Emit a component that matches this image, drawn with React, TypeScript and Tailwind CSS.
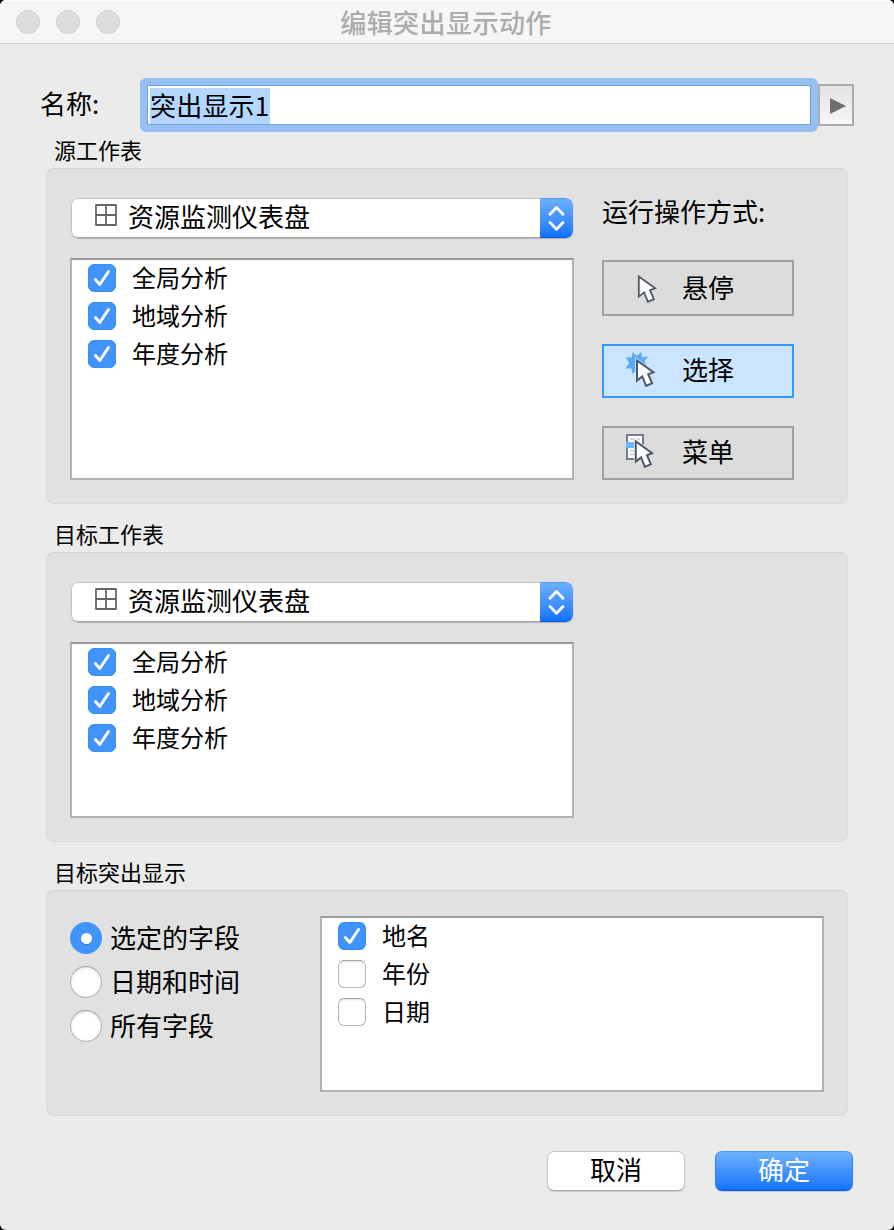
import { useState } from "react";
import clsx from "clsx";

interface CheckItem {
  label: string;
  checked: boolean;
}

const SHEETS: CheckItem[] = [
  { label: "全局分析", checked: true },
  { label: "地域分析", checked: true },
  { label: "年度分析", checked: true },
];

const FIELDS: CheckItem[] = [
  { label: "地名", checked: true },
  { label: "年份", checked: false },
  { label: "日期", checked: false },
];

const HIGHLIGHT_MODES = ["选定的字段", "日期和时间", "所有字段"];

const CURSOR = "M16.8 8.4V28.6L22.1 24.4L25.9 33.8L31.9 31.2L28 22.2L33.2 20.2Z";

// 8-pointed burst behind the select cursor
const BURST =
  "M14.9 5L19.6 1L19.8 6.2L26 5.6L22.6 10.5L26 16.5L19.8 17.1L15 19L10.2 23L9.6 17.6L3.6 17.4L7.2 12L3.6 6.2L9.8 6.4L10.4 1Z";

const HoverIcon = () => (
  <svg width="40" height="40" viewBox="0 0 40 40">
    <path d={CURSOR} fill="#fff" stroke="#505a66" strokeWidth="1.8" />
  </svg>
);

const SelectIcon = () => (
  <svg width="40" height="40" viewBox="0 0 40 40">
    <path d={BURST} fill="#5aabf5" />
    <g transform="translate(-1.8 1)">
      <path d={CURSOR} fill="#cbe4ff" stroke="#cbe4ff" strokeWidth="3.6" />
      <path d={CURSOR} fill="#fff" stroke="#505a66" strokeWidth="2" />
    </g>
  </svg>
);

const MenuIcon = () => (
  <svg width="40" height="40" viewBox="0 0 40 40">
    <rect x="5" y="2" width="16" height="24" fill="#fff" stroke="#6f7d8c" strokeWidth="2" />
    <path d="M8 6H12M15 6H18M8 17.5H12M8 21.5H12" stroke="#c3c6ca" strokeWidth="1.6" />
    <rect x="4" y="9" width="8" height="6" fill="#6bb8fb" />
    <g transform="translate(-3 0)">
      <path d={CURSOR} fill="#e6e6e6" stroke="#e6e6e6" strokeWidth="3.6" />
      <path d={CURSOR} fill="#fff" stroke="#505a66" strokeWidth="2" />
    </g>
  </svg>
);

const TRIGGERS = [
  { id: "hover", label: "悬停", Icon: HoverIcon, size: "h-[56px]", text: "pb-[2px]" },
  { id: "select", label: "选择", Icon: SelectIcon, size: "h-[54px]", text: "pb-[4px]" },
  { id: "menu", label: "菜单", Icon: MenuIcon, size: "h-[54px]", text: "pb-[4px]" },
];

function TitleBar() {
  return (
    <header className="flex h-[44px] border-t border-b border-t-white border-b-[#cdcdcd] bg-[#f6f6f6]">
      <div className="flex w-[299px] items-center gap-4 pl-4">
        {[0, 1, 2].map((i) => (
          <span key={i} className="size-6 rounded-full border border-[#cecece] bg-[#dddddd]" />
        ))}
      </div>
      <h1 className="w-[294px] text-center text-[26px] leading-[41px] font-medium tracking-[0.45px] text-[#acacac]">
        编辑突出显示动作
      </h1>
    </header>
  );
}

function GroupLabel({ children, className }: { children: React.ReactNode; className: string }) {
  return (
    <h2 className={clsx("flex items-end pb-[2px] pl-[8px] text-[22px] leading-[34px] font-normal", className)}>
      {children}
    </h2>
  );
}

function Group({ children, className }: { children: React.ReactNode; className: string }) {
  return (
    <section
      className={clsx(
        "flex w-[802px] rounded-[8px] border border-[#dadada] border-t-[#d2d2d2] bg-[#e1e1e1] pl-[23px]",
        className
      )}
    >
      {children}
    </section>
  );
}

function DashboardSelect() {
  return (
    <button className="ml-px flex h-[40px] w-[502px] overflow-hidden rounded-[7px] bg-white text-left shadow-[0_1px_1px_rgba(0,0,0,0.2)]">
      <span className="flex h-full flex-1 rounded-l-[7px] border border-r-0 border-[#c3c3c3] border-b-[#a6a6a6] pl-[23px]">
        <svg width="22" height="22" viewBox="0 0 22 22" className="mt-[5px]">
          <path d="M1 1H21V21H1ZM11 1V21M1 11H21" fill="none" stroke="#666" strokeWidth="1.8" strokeLinejoin="round" />
        </svg>
        <span className="ml-[11px] text-[26px] leading-[33px]">资源监测仪表盘</span>
      </span>
      <span className="h-full w-[33px] rounded-r-[7px] border-t border-b border-t-[#4a9bf8] border-b-[#0a55f0] bg-linear-to-b from-[#6cb1fb] to-[#1072fe]">
        <svg width="33" height="38" viewBox="0 0 33 38">
          <path
            d="M10 15.2L16.5 8.4L23 15.2M10 23.6L16.5 30.2L23 23.6"
            fill="none"
            stroke="#fff"
            strokeWidth="2.8"
            strokeLinecap="round"
            strokeLinejoin="round"
          />
        </svg>
      </span>
    </button>
  );
}

function Checkbox({ checked }: { checked: boolean }) {
  if (!checked) {
    return (
      <span className="size-7 rounded-[6px] border border-[#b9b9b9] border-t-[#a6a6a6] bg-white shadow-[inset_0_1px_2px_rgba(0,0,0,0.12)]" />
    );
  }
  return (
    <span className="size-7 rounded-[6px] border border-[#3b8df4] bg-[#4094fc]">
      <svg width="26" height="26" viewBox="1 1 26 26">
        <path
          d="M7.4 15.5L11.8 20.5L20.5 7.5"
          fill="none"
          stroke="#fff"
          strokeWidth="2.9"
          strokeLinecap="round"
          strokeLinejoin="round"
        />
      </svg>
    </span>
  );
}

function CheckList({ initial, className }: { initial: CheckItem[]; className: string }) {
  const [items, setItems] = useState(initial);

  const toggle = (index: number) => {
    setItems(items.map((item, i) => (i === index ? { ...item, checked: !item.checked } : item)));
  };

  return (
    <ul
      className={clsx(
        "flex w-[504px] flex-col gap-[10px] border-2 border-[#b2b2b2] border-t-[#9c9c9c] bg-white pt-[4px] pl-[16px]",
        className
      )}
    >
      {items.map((item, i) => (
        <li key={item.label} className="flex h-7 gap-4" onClick={() => toggle(i)}>
          <Checkbox checked={item.checked} />
          <span className="text-[24px] leading-[26px]">{item.label}</span>
        </li>
      ))}
    </ul>
  );
}

function TriggerButtons() {
  const [active, setActive] = useState("select");

  return (
    <div className="ml-[28px] flex w-[192px] flex-col">
      <p className="h-[62px] text-[26px] leading-[26px] whitespace-nowrap">运行操作方式:</p>
      <div className="flex flex-col gap-[28px]">
        {TRIGGERS.map(({ id, label, Icon, size, text }) => (
          <button
            key={id}
            onClick={() => setActive(id)}
            className={clsx(
              "flex items-center border-2 pl-[18px] text-[26px]",
              size,
              active === id ? "border-[#3399ff] bg-[#cbe4ff]" : "border-[#9f9f9f] bg-[#dcdcdc]"
            )}
          >
            <Icon />
            <span className={clsx("ml-[20px] leading-[46px]", text)}>{label}</span>
          </button>
        ))}
      </div>
    </div>
  );
}

function HighlightModes() {
  const [mode, setMode] = useState(0);

  return (
    <div className="mt-[6px] flex w-[250px] flex-col gap-[12px]">
      {HIGHLIGHT_MODES.map((label, i) => (
        <label key={label} className="flex h-8 gap-[8px]" onClick={() => setMode(i)}>
          {mode === i ? (
            <span className="flex size-8 items-center justify-center rounded-full bg-[#4094fc]">
              <span className="size-[11px] rounded-full bg-white shadow-[0_1px_1px_rgba(0,0,0,0.2)]" />
            </span>
          ) : (
            <span className="size-8 rounded-full border border-[#b4b4b4] border-t-[#9c9c9c] bg-white shadow-[inset_0_1px_3px_rgba(0,0,0,0.14)]" />
          )}
          <span className="text-[26px] leading-[30px]">{label}</span>
        </label>
      ))}
    </div>
  );
}

export default function App() {
  return (
    <div className="h-[1230px] w-[894px] bg-black font-['Noto_Sans_CJK_SC',sans-serif] text-black">
      <div className="flex h-full flex-col overflow-hidden rounded-[6px] bg-[#ebebeb]">
        <TitleBar />

        <main className="flex flex-col pt-[34px] pl-[46px]">
          <div className="-ml-[6px] flex h-[54px] items-center">
            <span className="w-[100px] pb-[4px] text-[26px] leading-[50px]">名称:</span>
            <div className="h-[54px] w-[678px] rounded-[6px] bg-[#96c0f3] p-[7px]">
              <div className="h-[40px] border border-[#72a0dc] bg-white pt-[2px] pl-[2px]">
                <span className="block h-[36px] w-[120px] bg-[#b3d7ff] text-[26px] leading-[33px] tracking-[0.2px]">
                  突出显示1
                </span>
              </div>
            </div>
            <button className="flex h-[42px] w-[36px] items-center justify-center border-2 border-[#acacac] bg-linear-to-b from-[#e2e2e2] to-[#f7f7f7]">
              <svg width="16" height="16" viewBox="0 0 16 16" className="mt-[2px] ml-[3px]">
                <path d="M0 0L16 8L0 16Z" fill="#6f6f6f" />
              </svg>
            </button>
          </div>

          <GroupLabel className="h-[36px]">源工作表</GroupLabel>
          <Group className="h-[336px] pt-[29px]">
            <div className="flex flex-col gap-[20px]">
              <DashboardSelect />
              <CheckList initial={SHEETS} className="h-[222px]" />
            </div>
            <TriggerButtons />
          </Group>

          <GroupLabel className="h-[48px]">目标工作表</GroupLabel>
          <Group className="h-[290px] pt-[29px]">
            <div className="flex flex-col gap-[20px]">
              <DashboardSelect />
              <CheckList initial={SHEETS} className="h-[176px]" />
            </div>
          </Group>

          <GroupLabel className="h-[48px]">目标突出显示</GroupLabel>
          <Group className="h-[226px] pt-[25px]">
            <HighlightModes />
            <CheckList initial={FIELDS} className="h-[176px]" />
          </Group>
        </main>

        <footer className="mt-[35px] flex justify-end gap-[30px] pr-[41px]">
          <button className="h-[40px] w-[138px] rounded-[7px] border border-[#c6c6c6] border-b-[#a9a9a9] bg-white pb-[5px] text-[26px] leading-[33px] shadow-[0_1px_1px_rgba(0,0,0,0.15)]">
            取消
          </button>
          <button className="h-[40px] w-[138px] rounded-[7px] border border-[#2f82f7] border-t-[#4a9bf8] border-b-[#0a55f0] bg-linear-to-b from-[#6cb1fb] to-[#1072fe] pb-[5px] text-[26px] leading-[33px] text-white shadow-[0_1px_1px_rgba(0,0,0,0.15)]">
            确定
          </button>
        </footer>
      </div>
    </div>
  );
}
